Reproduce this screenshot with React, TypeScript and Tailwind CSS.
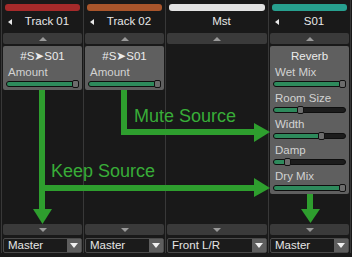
import React from "react";

const font = { fontFamily: '"Liberation Sans", Arial, sans-serif' };

function Slider({ v }: { v: number }) {
  return (
    <div className="relative mx-[3px] h-[6px] rounded-[3px] border border-[#0e0e0e] bg-[#1c1c1c]">
      <div className="absolute left-0 top-0 h-full rounded-[2px] bg-[#2e8a5c]" style={{ width: `${v}%` }} />
      <div
        className="absolute top-[-2px] h-[8px] w-[7px] rounded-[2px] border border-[#111] bg-[#6c6c6c]"
        style={{ left: `calc(${v}% - 6px)` }}
      />
    </div>
  );
}

function Param({ label, v }: { label: string; v: number }) {
  return (
    <div className="flex flex-col pb-[3px]">
      <div className="h-[17px] px-[5px] text-[11.5px] leading-[17px] text-[#d2d2d2]">{label}</div>
      <Slider v={v} />
    </div>
  );
}

function UpBtn() {
  return (
    <div className="flex h-[11px] items-center justify-center rounded-[2px] bg-[#3a3a3a]">
      <div className="h-0 w-0 border-x-[4px] border-b-[4px] border-x-transparent border-b-[#9a9a9a]" />
    </div>
  );
}
function DownBtn() {
  return (
    <div className="flex h-[11px] items-center justify-center rounded-[2px] bg-[#3a3a3a]">
      <div className="h-0 w-0 border-x-[4px] border-t-[4px] border-x-transparent border-t-[#9a9a9a]" />
    </div>
  );
}

function Dropdown({ label }: { label: string }) {
  return (
    <div className="flex h-[15px] items-stretch rounded-[2px] border border-[#4a4a4a] bg-[#1b1b1b]">
      <div className="flex-1 overflow-hidden whitespace-nowrap pl-[4px] text-[11.5px] leading-[13px] text-[#e6e6e6]">{label}</div>
      <div className="flex w-[14px] items-center justify-center bg-[#5e5e5e]">
        <div className="h-0 w-0 border-x-[4px] border-t-[5px] border-x-transparent border-t-[#f0f0f0]" />
      </div>
    </div>
  );
}

function Strip({
  w,
  color,
  name,
  arrow,
  out,
  children,
}: {
  w: string;
  color: string;
  name: string;
  arrow: boolean;
  out: string;
  children?: React.ReactNode;
}) {
  return (
    <div className={`flex ${w} flex-col`}>
      <div className="px-[2px] pt-[4px]">
        <div className="h-[7px] rounded-[3px]" style={{ backgroundColor: color }} />
      </div>
      <div className="flex h-[22px] items-center">
        <div className="flex w-[9px] justify-end">
          {arrow && <div className="h-0 w-0 border-y-[3px] border-r-[4px] border-y-transparent border-r-[#e8e8e8]" />}
        </div>
        <div className="flex-1 text-center text-[11.5px] text-[#e8e8e8]">{name}</div>
      </div>
      <UpBtn />
      <div className="mt-[2px] flex-1">{children}</div>
      <DownBtn />
      <div className="mt-[3px]">
        <Dropdown label={out} />
      </div>
    </div>
  );
}

function Box({ title, children }: { title: string; children: React.ReactNode }) {
  return (
    <div className="rounded-[2px] bg-[#5f5f5f]">
      <div className="h-[18px] text-center text-[11.5px] leading-[20px] text-[#ececec]">{title}</div>
      {children}
    </div>
  );
}

function Sep() {
  return (
    <div className="flex w-[3px] justify-center">
      <div className="w-px bg-[#383838]" />
    </div>
  );
}

export default function App() {
  return (
    <div className="relative h-[257px] w-[352px] overflow-hidden bg-[#191919]" style={font}>
      <div className="flex h-full pb-[4px]">
        <Sep />
        <Strip w="w-[79px]" color="#a52a2a" name="Track 01" arrow out="Master">
          <Box title="#S➤S01">
            <Param label="Amount" v={100} />
          </Box>
        </Strip>
        <Sep />
        <Strip w="w-[79px]" color="#a9552b" name="Track 02" arrow out="Master">
          <Box title="#S➤S01">
            <Param label="Amount" v={100} />
          </Box>
        </Strip>
        <Sep />
        <Strip w="w-[100px]" color="#e2e2e2" name="Mst" arrow={false} out="Front L/R" />
        <Sep />
        <Strip w="w-[79px]" color="#27a08f" name="S01" arrow out="Master">
          <Box title="Reverb">
            <Param label="Wet Mix" v={100} />
            <Param label="Room Size" v={41} />
            <Param label="Width" v={70} />
            <Param label="Damp" v={22} />
            <Param label="Dry Mix" v={100} />
          </Box>
        </Strip>
        <Sep />
      </div>
      <svg className="pointer-events-none absolute left-0 top-0" width="352" height="257">
        <g fill="#2e9e2e">
          <rect x="39" y="90" width="6" height="120" />
          <polygon points="33,209 52,209 42.5,224" />
          <rect x="45" y="185" width="210" height="6" />
          <polygon points="254,178 270,188 254,197" />
          <rect x="121" y="90" width="6" height="45" />
          <rect x="127" y="129" width="128" height="6" />
          <polygon points="254,123 270,132 254,142" />
          <rect x="307" y="194" width="6" height="16" />
          <polygon points="301,209 320,209 310.5,223" />
        </g>
        <text x="134" y="122" fill="#38ad38" fontSize="18" fontFamily="Liberation Sans, Arial, sans-serif">Mute Source</text>
        <text x="51" y="177" fill="#38ad38" fontSize="18" fontFamily="Liberation Sans, Arial, sans-serif">Keep Source</text>
      </svg>
    </div>
  );
}
